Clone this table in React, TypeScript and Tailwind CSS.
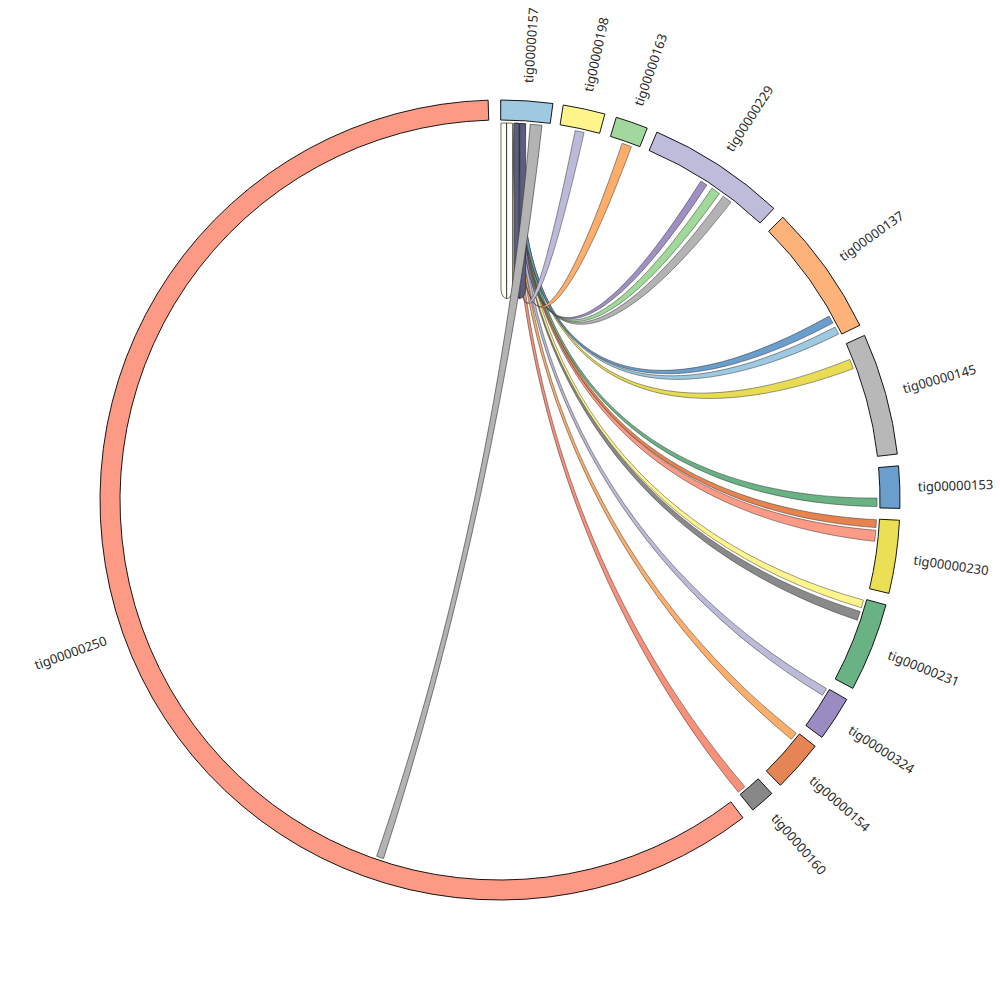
const CX = 500;
const CY = 500;
const R_OUT = 400;
const R_IN = 380;
const R_LINK = 377;
const R_CTRL = 140;
const R_LABEL = 418;

const pt = (r: number, deg: number) => {
    const a = (deg * Math.PI) / 180;
    return [CX + r * Math.sin(a), CY - r * Math.cos(a)];
};

const f = (p: number[]) => `${p[0].toFixed(2)} ${p[1].toFixed(2)}`;

const segments = [
    { name: "tig00000157", start: 0.1, end: 7.6, color: "#9ecae1" },
    { name: "tig00000198", start: 9.1, end: 15.2, color: "#fff58c" },
    { name: "tig00000163", start: 16.9, end: 21.6, color: "#a3d7a0" },
    { name: "tig00000229", start: 23.1, end: 43.2, color: "#bebbdb" },
    { name: "tig00000137", start: 45.0, end: 64.1, color: "#fdb27a" },
    { name: "tig00000145", start: 65.7, end: 83.4, color: "#b8b8b8" },
    { name: "tig00000153", start: 85.1, end: 91.2, color: "#6a9fcd" },
    { name: "tig00000230", start: 92.9, end: 103.5, color: "#ebdf55" },
    { name: "tig00000231", start: 105.2, end: 118.1, color: "#69b284" },
    { name: "tig00000324", start: 119.9, end: 126.4, color: "#9a8bc2" },
    { name: "tig00000154", start: 128.0, end: 135.5, color: "#e58555" },
    { name: "tig00000160", start: 137.2, end: 140.8, color: "#888888" },
    { name: "tig00000250", start: 142.6, end: 358.3, color: "#fc9a85" },
];

// links out of tig00000157, ordered left to right on the source side
const links = [
    { to: [139.5, 140.8], color: "#f8907a" },
    { to: [128.2, 129.4], color: "#fdae6b" },
    { to: [120.0, 121.2], color: "#bcbad9" },
    { to: [107.2, 108.6], color: "#8a8a8a" },
    { to: [105.4, 106.6], color: "#fff58c" },
    { to: [94.6, 96.3], color: "#fb9a85" },
    { to: [93.0, 94.2], color: "#e6834f" },
    { to: [89.7, 91.0], color: "#69b283" },
    { to: [68.1, 69.6], color: "#e8dc52" },
    { to: [62.7, 63.9], color: "#9ecae1" },
    { to: [60.8, 62.0], color: "#6a9ecd" },
    { to: [36.3, 37.8], color: "#b3b3b3" },
    { to: [34.2, 35.6], color: "#a1d99b" },
    { to: [32.2, 33.3], color: "#9e90c4" },
    { to: [18.9, 20.4], color: "#fdae6b" },
    { to: [11.5, 12.9], color: "#bcbad9" },
];

const segmentPath = (a: number, b: number) => {
    const large = b - a > 180 ? 1 : 0;
    return [
        `M ${f(pt(R_OUT, a))}`,
        `A ${R_OUT} ${R_OUT} 0 ${large} 1 ${f(pt(R_OUT, b))}`,
        `L ${f(pt(R_IN, b))}`,
        `A ${R_IN} ${R_IN} 0 ${large} 0 ${f(pt(R_IN, a))}`,
        "Z",
    ].join(" ");
};

const edge = (from: number, to: number) =>
    `C ${f(pt(R_CTRL, from))} ${f(pt(R_CTRL, to))} ${f(pt(R_LINK, to))}`;

// self links drop straight down and turn round near y=298
const loopEdge = (from: number, to: number) => {
    const xa = pt(R_LINK, from)[0].toFixed(2);
    const xb = pt(R_LINK, to)[0].toFixed(2);
    return `L ${xa} 288 C ${xa} 302 ${xb} 302 ${xb} 288 L ${f(pt(R_LINK, to))}`;
};

const ribbonPath = (a1: number, a2: number, b1: number, b2: number, self = false) => {
    const e = self ? loopEdge : edge;
    return [
        `M ${f(pt(R_LINK, a1))}`,
        `A ${R_LINK} ${R_LINK} 0 0 1 ${f(pt(R_LINK, a2))}`,
        e(a2, b1),
        `A ${R_LINK} ${R_LINK} 0 0 1 ${f(pt(R_LINK, b2))}`,
        e(b2, a1),
        "Z",
    ].join(" ");
};

const Label = ({ name, start, end }: { name: string; start: number; end: number }) => {
    const mid = (start + end) / 2;
    const [x, y] = pt(R_LABEL, mid);
    const left = mid > 180;
    const rot = left ? mid - 270 : mid - 90;
    return (
        <text
            x={0}
            y={0}
            transform={`translate(${x.toFixed(2)} ${y.toFixed(2)}) rotate(${rot.toFixed(2)})`}
            textAnchor={left ? "end" : "start"}
            dominantBaseline="central"
            fill="#2a2a2a"
            fontSize="13"
            style={{ fontFamily: '"Noto Sans", "DejaVu Sans", sans-serif' }}>
            {name}
        </text>
    );
};

const ChordDiagram = () => {
    return (
        <svg width="1000" height="1000" viewBox="0 0 1000 1000" className="block">
            {links.map((link, i) => {
                const s = 2.15 + i * 0.08;
                return (
                    <path
                        key={i}
                        d={ribbonPath(s, s + 0.55, link.to[0], link.to[1])}
                        fill={link.color}
                        stroke="#222"
                        strokeOpacity="0.75"
                        strokeWidth="0.6"
                    />
                );
            })}

            {/* self links on tig00000157 */}
            <path
                d={ribbonPath(2.1, 2.9, 3.0, 3.9, true)}
                fill="#5b5f7c"
                stroke="#222"
                strokeWidth="0.6"
            />
            <path
                d={ribbonPath(0.15, 1.0, 1.0, 1.9, true)}
                fill="#ffffff"
                stroke="#2e2e10"
                strokeWidth="0.7"
            />

            {/* long link down to tig00000250 */}
            <path
                d={ribbonPath(4.6, 6.4, 198.0, 199.1)}
                fill="#b3b3b3"
                stroke="#333"
                strokeWidth="0.6"
            />

            {segments.map((seg) => (
                <path
                    key={seg.name}
                    d={segmentPath(seg.start, seg.end)}
                    fill={seg.color}
                    stroke="#000"
                    strokeWidth="0.9"
                />
            ))}

            {segments.map((seg) => (
                <Label key={seg.name} {...seg} />
            ))}
        </svg>
    );
};

export default function App() {
    return (
        <div className="w-[1000px] h-[1000px] bg-white overflow-hidden">
            <ChordDiagram />
        </div>
    );
}
